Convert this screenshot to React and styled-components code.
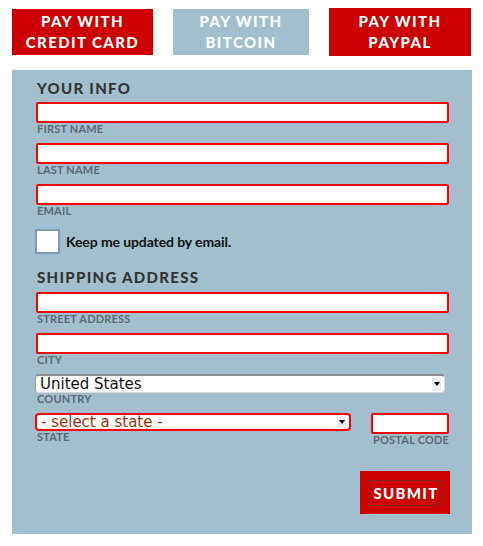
import React from 'react';
import styled, { createGlobalStyle } from 'styled-components';

const GlobalStyle = createGlobalStyle`
  body {
    margin: 0;
    background: #fff;
    font-family: "Lato", "Noto Sans", sans-serif;
  }
`;

const Page = styled.div`
  width: 483px;
  padding: 8px 0 0 12px;
  box-sizing: border-box;
`;

const Tabs = styled.div`
  display: flex;
  align-items: center;
  gap: 20px;
  height: 48px;
`;

const Tab = styled.button`
  width: ${(p) => p.$w}px;
  height: ${(p) => p.$h}px;
  border: 0;
  padding: 0;
  background: ${(p) => (p.$active ? '#cc0000' : '#a3bfcd')};
  color: #fff;
  font-family: "Lato", sans-serif;
  font-weight: 900;
  font-size: 15px;
  line-height: 21px;
  letter-spacing: 1.4px;
  text-transform: uppercase;
`;

const Panel = styled.form`
  width: 460px;
  margin-top: 14px;
  box-sizing: border-box;
  padding: 9px 23px 20px 24px;
  background: #a3bfcd;
`;

const Heading = styled.h3`
  margin: ${(p) => p.$top || 0}px 0 ${(p) => p.$bottom || 5}px 1px;
  font-family: "Lato", sans-serif;
  font-weight: 900;
  font-size: 15px;
  line-height: 18px;
  letter-spacing: 1.3px;
  color: #353535;
  text-transform: uppercase;
`;

const Field = styled.div`
  display: flex;
  flex-direction: column;
  width: ${(p) => (p.$w ? `${p.$w}px` : 'auto')};
  margin-bottom: 8px;
`;

const TextInput = styled.input`
  box-sizing: border-box;
  width: 100%;
  height: 21px;
  border: 2px solid #ff0000;
  border-radius: 2px;
  background: #fff;
  outline: none;
`;

const Label = styled.label`
  font-family: "Lato", sans-serif;
  font-weight: 700;
  font-size: 11px;
  line-height: 12px;
  letter-spacing: 0.2px;
  color: #5b6a75;
  text-transform: uppercase;
  white-space: nowrap;
  padding-left: ${(p) => p.$pad || 1}px;
`;

const SelectBox = styled.div`
  position: relative;
  box-sizing: border-box;
  margin-left: -1px;
  width: ${(p) => p.$w}px;
  height: ${(p) => p.$h}px;
  background: #fff;
  border-radius: 4px;
  border: ${(p) => (p.$error ? '2px solid #ff0000' : '1px solid #d8d8d8')};
  border-top: ${(p) => (p.$error ? '2px solid #ff0000' : '2px solid #8a8a8a')};
  border-left: ${(p) => (p.$error ? '2px solid #ff0000' : '1px solid #9a9a9a')};
  font-family: "DejaVu Sans", sans-serif;
  font-size: 15px;
  line-height: ${(p) => (p.$error ? p.$h - 4 : p.$h - 3)}px;
  padding-left: 4px;
  color: ${(p) => (p.$error ? '#993311' : '#111')};
  overflow: hidden;
  white-space: nowrap;
`;

const Arrow = styled.span`
  position: absolute;
  right: 3px;
  top: 1px;
  bottom: 1px;
  width: 9px;
  background: #ececec;
  &::after {
    content: '';
    position: absolute;
    left: 2px;
    top: 50%;
    margin-top: -2px;
    border-left: 3px solid transparent;
    border-right: 3px solid transparent;
    border-top: 4px solid #000;
  }
`;

const CheckRow = styled.label`
  display: flex;
  align-items: center;
  gap: 6px;
  margin: 12px 0 0 -1px;
  height: 25px;
  font-family: "Lato", sans-serif;
  font-weight: 700;
  font-size: 14px;
  letter-spacing: -0.1px;
  color: #111;
`;

const Box = styled.span`
  box-sizing: border-box;
  width: 25px;
  height: 25px;
  background: #fff;
  border: 2px solid #7d9bb2;
`;

const Row = styled.div`
  display: flex;
  gap: 20px;
  align-items: flex-start;
`;

const Actions = styled.div`
  display: flex;
  justify-content: flex-end;
  margin-top: 17px;
`;

const Submit = styled.button`
  width: 90px;
  height: 43px;
  margin-right: -1px;
  padding: 0;
  border: 0;
  background: #cc0000;
  color: #fff;
  font-family: "Lato", sans-serif;
  font-weight: 900;
  font-size: 15px;
  letter-spacing: 1.3px;
  text-transform: uppercase;
  span {
    display: inline-block;
    padding: 3px 2px 3px 4px;
    outline: 1px dotted #444;
  }
`;

export default function App() {
  return (
    <Page>
      <GlobalStyle />
      <Tabs>
        <Tab $active $w={141} $h={46}>Pay with<br />credit card</Tab>
        <Tab $w={136} $h={46}>Pay with<br />bitcoin</Tab>
        <Tab $active $w={142} $h={48}>Pay with<br />PayPal</Tab>
      </Tabs>
      <Panel onSubmit={(e) => e.preventDefault()}>
        <Heading>Your info</Heading>
        <Field>
          <TextInput />
          <Label>First name</Label>
        </Field>
        <Field>
          <TextInput />
          <Label>Last name</Label>
        </Field>
        <Field>
          <TextInput />
          <Label>Email</Label>
        </Field>
        <CheckRow>
          <Box />
          Keep me updated by email.
        </CheckRow>
        <Heading $top={14} $bottom={6}>Shipping address</Heading>
        <Field>
          <TextInput />
          <Label>Street address</Label>
        </Field>
        <Field>
          <TextInput />
          <Label>City</Label>
        </Field>
        <Field>
          <SelectBox $w={410} $h={19}>
            United States
            <Arrow />
          </SelectBox>
          <Label>Country</Label>
        </Field>
        <Row>
          <Field $w={316}>
            <SelectBox $w={316} $h={18} $error>
              - select a state -
              <Arrow />
            </SelectBox>
            <Label>State</Label>
          </Field>
          <Field $w={78}>
            <TextInput />
            <Label $pad={2}>Postal code</Label>
          </Field>
        </Row>
        <Actions>
          <Submit type="submit"><span>Submit</span></Submit>
        </Actions>
      </Panel>
    </Page>
  );
}
